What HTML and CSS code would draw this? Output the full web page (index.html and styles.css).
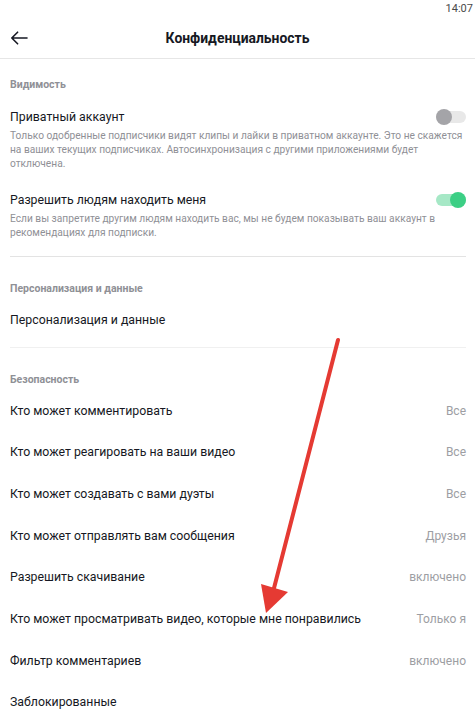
FILE: index.html
```html
<!DOCTYPE html>
<html lang="ru">
<head>
<meta charset="utf-8">
<title>Конфиденциальность</title>
<link rel="stylesheet" href="styles.css">
</head>
<body>
<div class="screen">
  <div class="status"><span class="time">14:07</span></div>
  <header class="header">
    <span class="back">
      <svg width="18" height="14" viewBox="0 0 18 14"><path d="M17 7H1.8M7.6 1.2L1.8 7l5.8 5.8" fill="none" stroke="#161823" stroke-width="1.6" stroke-linecap="round" stroke-linejoin="round"/></svg>
    </span>
    <h1 class="title">Конфиденциальность</h1>
  </header>

  <div class="section-title first">Видимость</div>
  <div class="toggle-item">
    <div class="toggle-row">
      <span class="item-label">Приватный аккаунт</span>
      <span class="switch off"><span class="knob"></span></span>
    </div>
    <p class="desc">Только одобренные подписчики видят клипы и лайки в приватном аккаунте. Это не скажется на ваших текущих подписчиках. Автосинхронизация с другими приложениями будет отключена.</p>
  </div>
  <div class="toggle-item second">
    <div class="toggle-row">
      <span class="item-label">Разрешить людям находить меня</span>
      <span class="switch on"><span class="knob"></span></span>
    </div>
    <p class="desc">Если вы запретите другим людям находить вас, мы не будем показывать ваш аккаунт в рекомендациях для подписки.</p>
  </div>
  <div class="divider strong"></div>

  <div class="section-title">Персонализация и данные</div>
  <div class="row"><span class="item-label">Персонализация и данные</span></div>
  <div class="divider faint"></div>

  <div class="section-title">Безопасность</div>
  <div class="row"><span class="item-label">Кто может комментировать</span><span class="value">Все</span></div>
  <div class="row"><span class="item-label">Кто может реагировать на ваши видео</span><span class="value">Все</span></div>
  <div class="row"><span class="item-label">Кто может создавать с вами дуэты</span><span class="value">Все</span></div>
  <div class="row"><span class="item-label">Кто может отправлять вам сообщения</span><span class="value">Друзья</span></div>
  <div class="row"><span class="item-label">Разрешить скачивание</span><span class="value">включено</span></div>
  <div class="row"><span class="item-label">Кто может просматривать видео, которые мне понравились</span><span class="value">Только я</span></div>
  <div class="row"><span class="item-label">Фильтр комментариев</span><span class="value">включено</span></div>
  <div class="row"><span class="item-label">Заблокированные</span></div>

  <svg class="annotation" width="475" height="720" viewBox="0 0 475 720">
    <line x1="338" y1="340" x2="273" y2="592" stroke="#e53a33" stroke-width="4" stroke-linecap="round"/>
    <polygon points="266,613 261,584 288,592" fill="#e53a33"/>
  </svg>
</div>
</body>
</html>
```
FILE: styles.css
```css
* { box-sizing: border-box; }
html, body { margin: 0; padding: 0; background: #fff; }
body { font-family: Roboto, "Noto Sans", "Liberation Sans", sans-serif; color: #161823; }
.screen { position: relative; width: 475px; height: 720px; overflow: hidden; background: #fff; }

.status { height: 18px; display: flex; justify-content: flex-end; align-items: center; padding-right: 2px; }
.time { font-size: 11px; color: #4a4a4a; line-height: 18px; }

.header { height: 41px; display: flex; align-items: center; justify-content: center; position: relative; border-bottom: 1px solid #e6e6e6; }
.back { position: absolute; left: 10px; top: 13px; width: 18px; height: 14px; display: flex; }
.title { margin: 0; font-size: 13.9px; font-weight: 700; color: #161823; }

.section-title { font-size: 10.5px; font-weight: 700; color: #8f9096; line-height: 16px; padding: 24px 10px 2px; }
.section-title.first { padding-top: 18px; }

.toggle-item { padding: 11.5px 9px 0 10px; }
.toggle-item.second { padding-top: 18.3px; }
.toggle-row { display: flex; justify-content: space-between; align-items: center; height: 20px; }
.item-label { font-size: 12.3px; color: #161823; }
.desc { margin: 2px 0 0; width: 454px; font-size: 10.2px; line-height: 14.3px; color: #8f9096; }

.switch { position: relative; width: 30px; height: 12px; border-radius: 6px; display: block; }
.switch.off { background: #e8e8e8; }
.switch.on { background: #a6e8c6; }
.knob { position: absolute; top: -2px; width: 16px; height: 16px; border-radius: 50%; }
.switch.off .knob { left: 0; background: #a4a4a8; }
.switch.on .knob { right: 0; background: #3ccf85; }

.divider { margin: 16px 9px 0 10px; height: 1px; }
.divider.strong { background: #e3e3e3; }
.divider.faint { margin-top: 5.7px; background: #f0f0f0; }

.row { height: 41.7px; display: flex; justify-content: space-between; align-items: center; padding: 0 9px 0 10px; }
.value { font-size: 12px; color: #9d9ea3; }

.annotation { position: absolute; left: 0; top: 0; pointer-events: none; }
```
